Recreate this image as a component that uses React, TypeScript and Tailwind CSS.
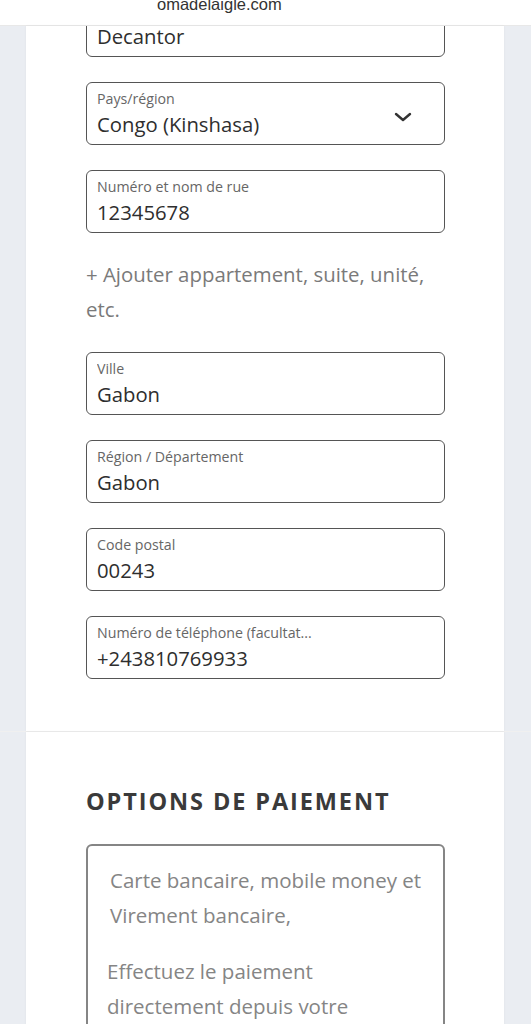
import React from "react";

const font = { fontFamily: '"Open Sans", "Noto Sans", sans-serif' };

function Field({ label, value, chevron }: { label: string; value: string; chevron?: boolean }) {
  return (
    <div className="relative h-[63px] rounded-[6px] border-[1.5px] border-[#555555] px-[10px] pt-[7px] flex items-start">
      <div className="flex-1 min-w-0">
        <div className="text-[14.2px] leading-[18px] text-[#666666] whitespace-nowrap overflow-hidden">{label}</div>
        <div className="mt-[2px] text-[20.3px] leading-[28px] text-[#2e2e2e]">{value}</div>
      </div>
      {chevron && (
        <svg className="self-center mr-[22px]" width="18" height="10" viewBox="0 0 18 10" fill="none">
          <polyline points="2,2 9,8 16,2" stroke="#333333" strokeWidth="2.4" strokeLinecap="round" strokeLinejoin="round" />
        </svg>
      )}
    </div>
  );
}

export default function App() {
  return (
    <div className="w-[531px] h-[1024px] overflow-hidden bg-[#eaedf2]" style={font}>
      <div className="h-[26px] bg-white border-b border-[#e8e8e8] overflow-hidden pl-[157px]">
        <div
          className="text-[16.5px] leading-[16.5px] text-[#333333] -mt-[4px]"
          style={{ fontFamily: '"Liberation Sans", Arial, sans-serif' }}
        >
          omadelaigle.com
        </div>
      </div>

      <div className="flex h-[705px]">
        <div className="w-[26px] shrink-0" />
        <div className="w-[478px] shrink-0 bg-white overflow-hidden shadow-[0_0_2px_rgba(0,0,0,0.06)]">
          <div className="pl-[60px] pr-[59px] -mt-[32px] flex flex-col gap-[25px]">
            <Field label="Prénom" value="Decantor" />
            <Field label="Pays/région" value="Congo (Kinshasa)" chevron />
            <Field label="Numéro et nom de rue" value="12345678" />
          </div>
          <div className="pl-[60px] pr-[50px] mt-[24px] mb-[25px] text-[20.4px] leading-[35px] text-[#7a7a7a]">
            + Ajouter appartement, suite, unité, etc.
          </div>
          <div className="pl-[60px] pr-[59px] flex flex-col gap-[25px]">
            <Field label="Ville" value="Gabon" />
            <Field label="Région / Département" value="Gabon" />
            <Field label="Code postal" value="00243" />
            <Field label="Numéro de téléphone (facultat..." value="+243810769933" />
          </div>
        </div>
        <div className="flex-1" />
      </div>

      <div className="flex border-t border-[#f0f0f0] h-[400px]">
        <div className="w-[26px] shrink-0" />
        <div className="w-[478px] shrink-0 bg-white shadow-[0_0_2px_rgba(0,0,0,0.06)] pl-[60px] pr-[59px] pt-[53px]">
          <h2 className="text-[23.5px] leading-[32px] font-bold tracking-[1.9px] text-[#3a3a3a] whitespace-nowrap">
            OPTIONS DE PAIEMENT
          </h2>
          <div className="mt-[27px] rounded-[6px] border-2 border-[#858585] pt-[17px] pl-[22px] pr-[10px] h-[300px]">
            <p className="text-[20.5px] leading-[35px] text-[#858585]">
              Carte bancaire, mobile money et Virement bancaire,
            </p>
            <p className="mt-[21px] -ml-[3px] pr-[60px] text-[20.5px] leading-[35px] text-[#858585]">
              Effectuez le paiement directement depuis votre compte bancaire.
            </p>
          </div>
        </div>
        <div className="flex-1" />
      </div>
    </div>
  );
}
